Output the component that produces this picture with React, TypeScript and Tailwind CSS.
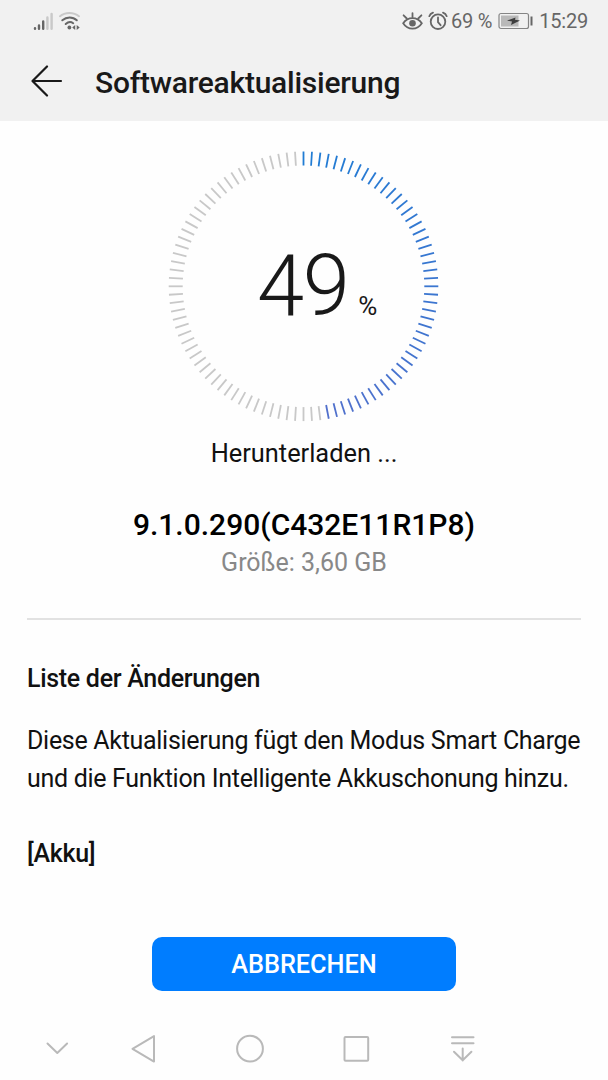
const TICKS = 100;
const DONE_TICKS = 48;

const FROM = [32, 124, 212];
const TO = [82, 112, 204];

const tickColor = (i: number) => {
  if (i >= DONE_TICKS) return '#c8c8c8';
  const t = i / DONE_TICKS;
  const [r, g, b] = FROM.map((c, k) => Math.round(c + (TO[k] - c) * t));
  return `rgb(${r}, ${g}, ${b})`;
};

// --- StatusBar ---
const StatusBar = () => (
  <div className="flex h-[41px] items-center justify-between pl-[33px] pr-5 text-[#666666]">
    <div className="flex items-center gap-[5px]">
      <svg width="20" height="20" viewBox="0 0 20 20" strokeWidth="2.4" strokeLinecap="round">
        <g stroke="#666666">
          <path d="M2 17.3v.5M6 14.5v3.3M10.2 10.5v7.3" />
        </g>
        <g stroke="#c9c9c9">
          <path d="M14.4 6.5v11.3M18.6 3v14.8" />
        </g>
      </svg>
      <svg width="23" height="20" viewBox="0 0 23 20" fill="none" strokeWidth="2" strokeLinecap="round">
        <path d="M2 5.2c5-4.4 13.8-4.4 19 0" stroke="#c9c9c9" />
        <path d="M4.3 9.3c4.3-3.8 10.5-3.8 14.5 0M7.7 13c2.5-2.2 5.5-2.2 7.5-.8" stroke="#666666" />
        <circle cx="11.4" cy="16.5" r="1.9" fill="#666666" />
        <path d="M17.2 14v5l-3-2.5zM18.7 14v5l3-2.5z" fill="#666666" />
      </svg>
    </div>
    <div className="flex items-center">
      <svg width="21" height="20" viewBox="0 0 21 20" fill="none" stroke="#666666" strokeWidth="1.8" strokeLinecap="round">
        <path d="M1.2 12.2c4.500-6.800 14.100-6.800 18.600 0c-4.500 7.200-14.100 7.200-18.600 0z" />
        <circle cx="10.5" cy="12.2" r="3.3" fill="#666666" stroke="none" />
        <path d="M10.5 6V2.2M4.8 7.5L1.6 4.3M16.2 7.5l3.2-3.2" />
      </svg>
      <svg className="ml-[5px]" width="20" height="20" viewBox="0 0 20 20" fill="none" stroke="#666666" strokeWidth="1.8" strokeLinecap="round">
        <circle cx="10" cy="10.7" r="7.3" />
        <path d="M10 6.5v4.7l2.6 3M1.3 5.2c.6-1.8 1.9-3 3.7-3.6M18.700 5.200c-.6-1.800-1.900-3-3.700-3.600" />
      </svg>
      <span className="ml-[3px] whitespace-nowrap text-[20px] leading-6 tracking-[-0.2px]">69 %</span>
      <svg className="ml-[6px]" width="35" height="18" viewBox="0 0 35 18" fill="none">
        <rect x="1" y="1.5" width="29.5" height="15" rx="2" stroke="#858585" strokeWidth="1.2" />
        <rect x="3" y="3.5" width="17.5" height="11" fill="#b9b9b9" />
        <path d="M9 8.6l8.500-3.100-.5 2.300 5 .6-9 4.500 1-3.300z" fill="#3f3f3f" />
        <path d="M33.500 4.500v9" stroke="#666666" strokeWidth="2" />
      </svg>
      <span className="ml-[6px] text-[20px] leading-6 tracking-[-0.2px]">15:29</span>
    </div>
  </div>
);

// --- ProgressRing ---
const ProgressRing = () => (
  <div className="relative mx-auto mt-[29px] h-[272px] w-[272px]">
    <svg width="272" height="272" viewBox="0 0 272 272" strokeWidth="1.8">
      {Array.from({ length: TICKS }, (_, i) => (
        <line
          key={i}
          x1="135.5" y1="1.5" x2="135.5" y2="15.5"
          stroke={tickColor(i)}
          transform={`rotate(${i * 3.6} 135.5 136.3)`}
        />
      ))}
    </svg>
    <div className="absolute inset-0 flex items-baseline pl-[89px] pt-[86px] text-[#191919]">
      <span className="text-[85px] font-light leading-[100px] tracking-[-1.5px]">49</span>
      <span className="ml-[10px] text-[26px]">%</span>
    </div>
  </div>
);

// --- NavBar ---
const NavBar = () => (
  <svg className="mt-auto block" width="608" height="64" viewBox="0 0 608 64" fill="none" stroke="#b9b9b9" strokeWidth="2" strokeLinecap="round" strokeLinejoin="round">
    <path d="M47.5 27.5l9.8 9.5 9.8-9.5" />
    <path d="M132.5 32.8l21.5-12.7v25.5z" />
    <circle cx="250" cy="32.7" r="12.9" />
    <rect x="344.5" y="21" width="23.7" height="23.7" rx="1" />
    <path d="M452 21.3h21.5M452 27.3h21.5M462.7 32.5v12M454 35.7l8.7 8.5 8.7-8.5" />
  </svg>
);

export default function App() {
  return (
    <div className="flex h-[1080px] w-[608px] flex-col overflow-hidden bg-[#fefefe] font-['Roboto',sans-serif] text-[#111111]">
      <header className="h-[121px] shrink-0 bg-[#f1f1f1]">
        <StatusBar />
        <div className="flex h-20 items-center pl-[31px]">
          <svg width="32" height="32" viewBox="0 0 32 32" fill="none" stroke="#191919" strokeWidth="2.2" strokeLinecap="round" strokeLinejoin="round">
            <path d="M30 16H1.5M16 1.5L1.5 16L16 30.5" />
          </svg>
          <h1 className="ml-8 mt-[3px] whitespace-nowrap text-[30px] font-medium leading-9 tracking-[-0.25px] text-[#191919]">Softwareaktualisierung</h1>
        </div>
      </header>

      <ProgressRing />

      <div className="flex flex-col items-center">
        <p className="mt-[14px] text-[25.4px] leading-[34px]">Herunterladen ...</p>
        <h2 className="mt-[36px] text-[30px] font-medium leading-[38px] text-black">9.1.0.290(C432E11R1P8)</h2>
        <p className="mt-px text-[25px] leading-[36px] text-[#888888]">Größe: 3,60 GB</p>
      </div>

      <div className="mx-[27px] mt-[37px] border-t-2 border-[#e2e2e2]" />

      <section className="ml-[27px] mt-[41px] whitespace-nowrap tracking-[-0.3px]">
        <h3 className="text-[25px] font-medium leading-[36px]">Liste der Änderungen</h3>
        <p className="mt-[25px] text-[25px] leading-[38px]">
          Diese Aktualisierung fügt den Modus Smart Charge
          <br />
          und die Funktion Intelligente Akkuschonung hinzu.
        </p>
        <h3 className="mt-[37px] text-[25px] font-medium leading-[38px]">[Akku]</h3>
      </section>

      <button className="mx-auto mt-[64px] h-[54px] w-[304px] shrink-0 rounded-[10px] bg-[#007dff] pt-[2px] text-[25.3px] font-medium text-white">
        ABBRECHEN
      </button>

      <NavBar />
    </div>
  );
}
